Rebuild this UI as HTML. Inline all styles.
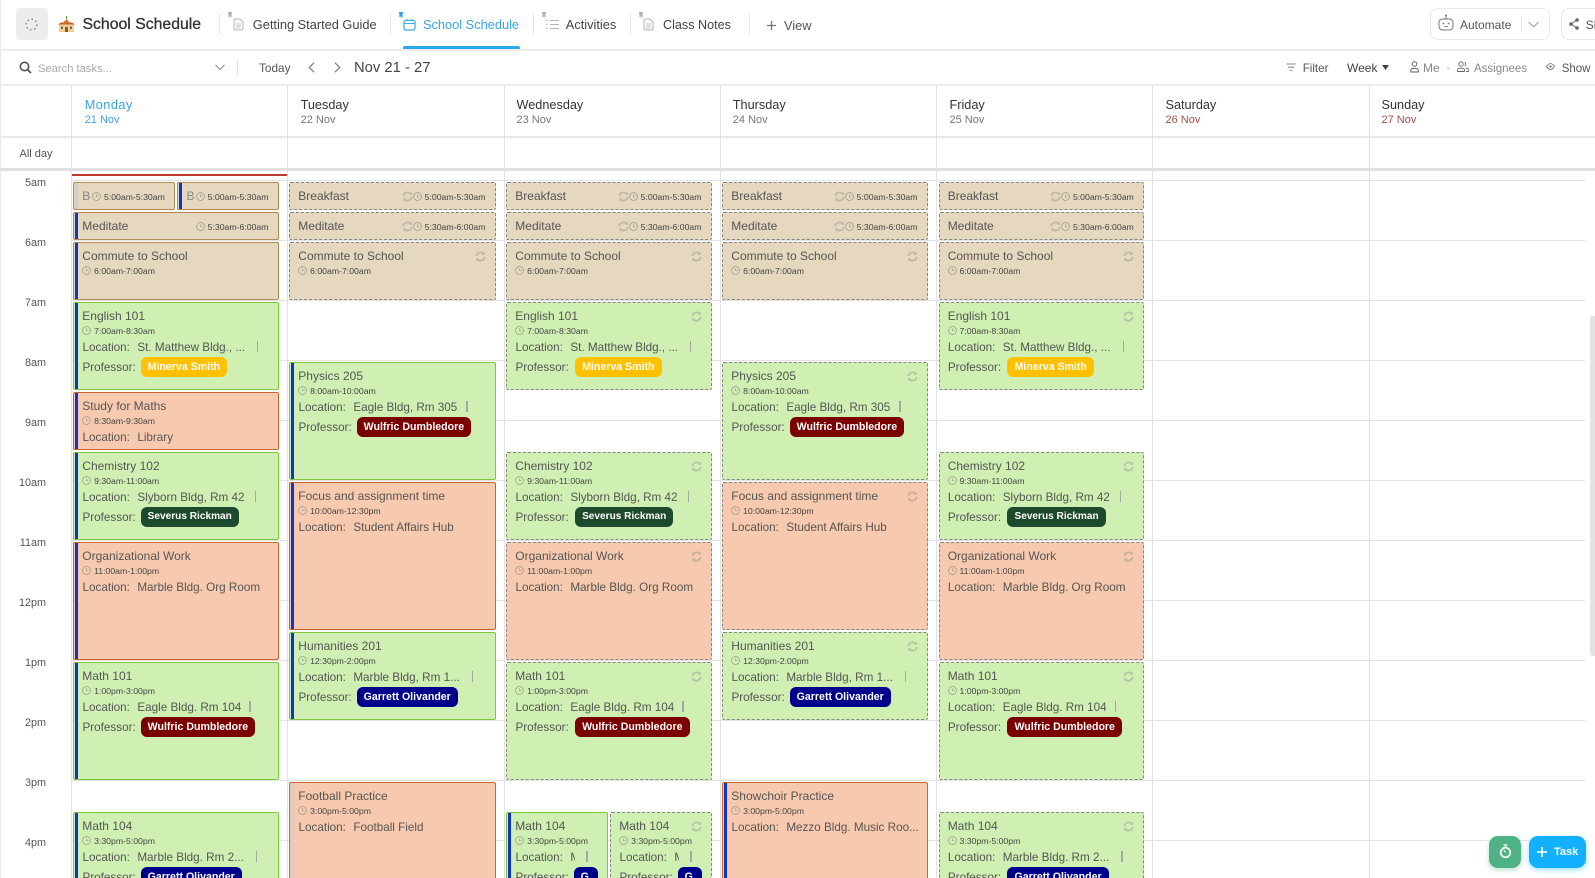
<!DOCTYPE html>
<html lang="en"><head><meta charset="utf-8"><title>School Schedule</title>
<style>
html,body{margin:0;padding:0;background:#fff}
#w{position:relative;width:1595px;height:878px;overflow:hidden;background:#fff;font-family:"Liberation Sans",sans-serif;color:#444}
.a{position:absolute;white-space:nowrap}
.hl{position:absolute;background:#e3e3e3;height:1px}
.vl{position:absolute;background:#e2e2e2;width:1px}
.td{position:absolute;width:1px;background:#e6e6e6;top:14px;height:20px}
.tab{position:absolute;top:17px;line-height:16px;font-size:12.8px;color:#444;white-space:nowrap}
.tb{position:absolute;top:60px;line-height:16px;font-size:12px;color:#555;white-space:nowrap}
.dn{position:absolute;top:96.5px;line-height:16px;font-size:12.7px;color:#333}
.dd{position:absolute;top:113px;line-height:14px;font-size:11px;color:#777}
.hr{position:absolute;left:10px;width:36px;text-align:right;font-size:10.8px;line-height:14px;color:#555}
.col{position:absolute;top:0;height:878px}
.e{position:absolute;left:0;right:0;box-sizing:border-box;border:1px solid;border-radius:2px;overflow:hidden;color:#555;font-size:11.7px}
.tan{background:#e5d8bf;border-color:#b08a52}
.g{background:#d0f0b3;border-color:#7cc63c}
.s{background:#f7c9ae;border-color:#c9642f}
.d{border:1px dashed #868686}
.b{position:absolute;left:.7px;top:-1px;bottom:-1px;width:3.3px;background:#1235c4}
.b.x{background:#cfcfcf}
.t{position:absolute;left:8px;top:3.7px;line-height:18px;font-size:12px;white-space:nowrap}
.m{position:absolute;left:8.2px;top:21.7px;line-height:12px;font-size:8.7px;color:#444;white-space:nowrap;display:flex;align-items:center}
.m svg{width:9px;height:9px;margin-right:2.6px}
.l{position:absolute;left:8.2px;top:36.6px;line-height:16px;white-space:nowrap}
.l span{margin-left:7.4px}
.l i{display:inline-block;width:1.3px;height:11px;background:#a6a6a6;margin-left:12px;vertical-align:-1px}
.l i.n8{margin-left:8px}.l i.n9{margin-left:9px}.l i.n10{margin-left:10px}
.p{position:absolute;left:8.2px;top:54.5px;line-height:20px;white-space:nowrap}
.tag{position:absolute;left:58.2px;top:-.8px;height:20px;line-height:20px;border-radius:6px;padding:0 7px;color:#fff;font-weight:bold;font-size:10.6px}
.k .tag{left:59.6px}
.mi{background:#ffc000}.wu{background:#7b0000}.se{background:#1d4a2c;font-size:10.1px}.ga{background:#00008b}
.rf{position:absolute;right:8.5px;top:7.5px;width:11px;height:11px}
.r{position:absolute;right:9.2px;top:7.7px;line-height:12px;font-size:8.7px;color:#444;display:flex;align-items:center;white-space:nowrap}
.r svg{width:9px;height:9px;margin-right:2.6px}
.r svg.q{margin-right:0;width:11px;height:11px}
</style></head><body><div id="w">
<svg width="0" height="0" style="position:absolute"><defs>
<symbol id="c" viewBox="0 0 10 10"><circle cx="5" cy="5" r="4.4" fill="none" stroke="#9a9a8c" stroke-width=".8"/><path d="M5 2.4V5.2H7.4" fill="none" stroke="#9a9a8c" stroke-width=".7"/></symbol>
<symbol id="f" viewBox="0 0 10 10"><g opacity=".45"><path d="M1.2 4.6A3.9 3.9 0 0 1 8 2.6M8.8 5.4A3.9 3.9 0 0 1 2 7.4" fill="none" stroke="#8f8f8f" stroke-width="1.6"/><path d="M8.9 .6V3.4H6.2ZM1.1 9.4V6.600H3.8Z" fill="#8f8f8f"/></g></symbol>
<symbol id="pin" viewBox="0 0 6 7"><path d="M1 0H5V1L4.4 3.4 5.6 4.6H3.4L3 7 2.6 4.6H.4L1.6 3.4 1 1Z" fill="currentColor"/></symbol>
</defs></svg>

<!-- top bar -->
<div class="a" style="left:0;top:0;width:1px;height:878px;background:#e8e8e8"></div>
<div class="a" style="left:16px;top:8px;width:32px;height:32px;border-radius:5px;background:#ececec"></div>
<svg class="a" style="left:25px;top:18px" width="13" height="13" viewBox="0 0 13 13"><circle cx="6.5" cy="6.5" r="5.4" fill="none" stroke="#777" stroke-width="1.2" stroke-dasharray="1.6 2.6"/></svg>
<svg class="a" style="left:58px;top:16px" width="17" height="17" viewBox="0 0 17 17"><path d="M8.5 0V3" stroke="#5a9a3a" stroke-width="1"/><path d="M8.5 3 13 8H4Z" fill="#d9792c"/><rect x="1" y="8" width="15" height="8" fill="#f0cf96"/><path d="M0 8.5 3 6.5H14L17 8.5Z" fill="#c8642a"/><rect x="7" y="11" width="3" height="5" fill="#8a5a2a"/><rect x="3" y="10.5" width="2" height="2.5" fill="#7a6a55"/><rect x="12" y="10.5" width="2" height="2.5" fill="#7a6a55"/></svg>
<div class="a" style="left:82.5px;top:15px;line-height:20px;font-size:15.8px;color:#333;-webkit-text-stroke:.3px #333">School Schedule</div>

<div class="td" style="left:219px"></div>
<svg class="a" style="left:227px;top:12px;color:#b4b4b4" width="6" height="7"><use href="#pin"/></svg>
<svg class="a" style="left:233px;top:18px" width="11" height="13" viewBox="0 0 11 13"><path d="M1 2.5A1.5 1.5 0 0 1 2.5 1H7L10 4V10.5A1.5 1.5 0 0 1 8.5 12H2.5A1.5 1.5 0 0 1 1 10.5Z" fill="#fafafa" stroke="#b5b5b5"/><path d="M3 6H8M3 8H8M3 10H7" stroke="#b5b5b5" stroke-width=".8"/></svg>
<div class="tab" style="left:252.8px">Getting Started Guide</div>
<div class="td" style="left:390px"></div>
<svg class="a" style="left:398px;top:12px;color:#2aa6e6" width="6" height="7"><use href="#pin"/></svg>
<svg class="a" style="left:403px;top:18px" width="13" height="13" viewBox="0 0 13 13"><rect x="1" y="2.5" width="11" height="9.5" rx="2" fill="none" stroke="#3aa9e4" stroke-width="1.2"/><path d="M1 5.5H12M4 1V3M9 1V3" stroke="#3aa9e4" stroke-width="1.1"/></svg>
<div class="tab" style="left:423px;color:#35a5e2">School Schedule</div>
<div class="a" style="left:403px;top:46px;width:117px;height:3px;background:#2aaae8;border-radius:2px 2px 0 0"></div>
<div class="td" style="left:533px"></div>
<svg class="a" style="left:541px;top:12px;color:#b4b4b4" width="6" height="7"><use href="#pin"/></svg>
<svg class="a" style="left:546px;top:18px" width="13" height="13" viewBox="0 0 13 13"><path d="M4 2.5H13M4 6.5H13M4 10.5H13" stroke="#b5b5b5" stroke-width="1"/><path d="M0 2.5H2M0 6.5H2M0 10.5H2" stroke="#b5b5b5" stroke-width="1.3" stroke-dasharray="1 .5"/></svg>
<div class="tab" style="left:565.8px">Activities</div>
<div class="td" style="left:630px"></div>
<svg class="a" style="left:638px;top:12px;color:#b4b4b4" width="6" height="7"><use href="#pin"/></svg>
<svg class="a" style="left:643px;top:18px" width="11" height="13" viewBox="0 0 11 13"><path d="M1 2.5A1.5 1.5 0 0 1 2.5 1H7L10 4V10.5A1.5 1.5 0 0 1 8.5 12H2.5A1.5 1.5 0 0 1 1 10.5Z" fill="#fafafa" stroke="#b5b5b5"/><path d="M3 6H8M3 8H8M3 10H7" stroke="#b5b5b5" stroke-width=".8"/></svg>
<div class="tab" style="left:663px;font-size:12.6px">Class Notes</div>
<div class="td" style="left:749px"></div>
<svg class="a" style="left:766px;top:20px" width="11" height="11" viewBox="0 0 11 11"><path d="M5.5 1V10M1 5.5H10" stroke="#777" stroke-width="1.3"/></svg>
<div class="tab" style="left:784px;top:18px;color:#555">View</div>

<div class="a" style="left:1429.5px;top:8px;width:120px;height:32px;box-sizing:border-box;border:1px solid #e8e8e8;border-radius:8px"></div>
<svg class="a" style="left:1438px;top:14px" width="16" height="17" viewBox="0 0 16 17"><rect x="1" y="5" width="14" height="11" rx="3.5" fill="none" stroke="#777" stroke-width="1"/><path d="M8 1.5V5" stroke="#777"/><circle cx="8" cy="1.5" r="1" fill="#777"/><circle cx="5.5" cy="9.5" r=".9" fill="#777"/><circle cx="10.5" cy="9.5" r=".9" fill="#777"/><path d="M6 12.5H10" stroke="#777" stroke-width=".8"/></svg>
<div class="tab" style="left:1460px;font-size:12px;color:#555">Automate</div>
<div class="a" style="left:1520.5px;top:16px;width:1px;height:16px;background:#e6e6e6"></div>
<svg class="a" style="left:1527.5px;top:21px" width="11" height="7" viewBox="0 0 11 7"><path d="M.5 1 5.5 6 10.5 1" fill="none" stroke="#999" stroke-width="1"/></svg>
<div class="a" style="left:1560.5px;top:8px;width:60px;height:32px;box-sizing:border-box;border:1px solid #e8e8e8;border-radius:8px"></div>
<svg class="a" style="left:1569px;top:18px" width="10" height="12" viewBox="0 0 10 12"><circle cx="8" cy="2" r="1.8" fill="#666"/><circle cx="2" cy="6" r="1.8" fill="#666"/><circle cx="8" cy="10" r="1.8" fill="#666"/><path d="M8 2 2 6 8 10" fill="none" stroke="#666"/></svg>
<div class="tab" style="left:1585.7px;font-size:12px;color:#555">Share</div>
<div class="hl" style="left:0;right:0;top:49px;height:1.5px;background:#ececec"></div>

<!-- toolbar -->
<svg class="a" style="left:19px;top:61px" width="13" height="13" viewBox="0 0 13 13"><circle cx="5.5" cy="5.5" r="4.2" fill="none" stroke="#555" stroke-width="1.6"/><path d="M8.6 8.6 12 12" stroke="#555" stroke-width="1.8"/></svg>
<div class="tb" style="left:38px;top:60.5px;font-size:11.2px;color:#aaa">Search tasks...</div>
<svg class="a" style="left:215px;top:64px" width="10" height="7" viewBox="0 0 10 7"><path d="M.5 1 5 5.5 9.5 1" fill="none" stroke="#888" stroke-width="1"/></svg>
<div class="a" style="left:237px;top:59px;width:1px;height:16px;background:#e2e2e2"></div>
<div class="tb" style="left:259px;font-size:11.8px">Today</div>
<svg class="a" style="left:308px;top:62px" width="7" height="11" viewBox="0 0 7 11"><path d="M6 .8 1.2 5.5 6 10.2" fill="none" stroke="#777" stroke-width="1.1"/></svg>
<svg class="a" style="left:334px;top:62px" width="7" height="11" viewBox="0 0 7 11"><path d="M1 .8 5.8 5.5 1 10.2" fill="none" stroke="#777" stroke-width="1.1"/></svg>
<div class="tb" style="left:354px;font-size:14.8px;color:#444">Nov 21 - 27</div>
<svg class="a" style="left:1286px;top:63px" width="10" height="9" viewBox="0 0 10 9"><path d="M.5 1H9.5M2 4.2H8M3.8 7.5H6.2" stroke="#888" stroke-width="1.1"/></svg>
<div class="tb" style="left:1302.7px;top:60.6px;font-size:11.6px">Filter</div>
<div class="tb" style="left:1347px;color:#444">Week</div>
<svg class="a" style="left:1381.5px;top:65px" width="7" height="5" viewBox="0 0 7 5"><path d="M0 0H7L3.5 5Z" fill="#444"/></svg>
<svg class="a" style="left:1409.5px;top:61px" width="9" height="12" viewBox="0 0 9 12"><circle cx="4.5" cy="3" r="2.3" fill="none" stroke="#666"/><path d="M.7 11V9.5A2 2 0 0 1 2.7 7.5H6.3A2 2 0 0 1 8.3 9.5V11H.7Z" fill="none" stroke="#666"/></svg>
<div class="tb" style="left:1423px;color:#888">Me</div>
<div class="a" style="left:1447px;top:66.5px;width:3px;height:3px;border-radius:50%;background:#ddd"></div>
<svg class="a" style="left:1457px;top:61px" width="12" height="12" viewBox="0 0 12 12"><circle cx="4" cy="3" r="2.2" fill="none" stroke="#666" stroke-width=".9"/><path d="M.6 10.5V9A2 2 0 0 1 2.6 7.2H5.4A2 2 0 0 1 7.4 9V10.5ZM7.6 1.2A2 2 0 0 1 7.6 4.8M8.6 7.2H9.4A2 2 0 0 1 11.4 9V10.5H9.2" fill="none" stroke="#666" stroke-width=".9"/></svg>
<div class="tb" style="left:1474px;top:60.6px;font-size:11.5px;color:#888">Assignees</div>
<svg class="a" style="left:1546px;top:62px" width="9" height="9" viewBox="0 0 9 9"><path d="M.5 4.5C2 2 3.2 1.6 4.5 1.6S7 2 8.500 4.5C7 7 5.800 7.400 4.500 7.400S2 7 .5 4.500Z" fill="none" stroke="#666" stroke-width=".8"/><circle cx="4.500" cy="4.500" r="1.100" fill="#666"/></svg>
<div class="tb" style="left:1561.7px;top:60.6px;font-size:11.5px">Show</div>
<div class="hl" style="left:0;right:0;top:84px;height:1.5px;background:#ececec"></div>

<!-- day headers -->
<div class="dn" style="left:84.700px;color:#3aa3e0;letter-spacing:.5px">Monday</div><div class="dd" style="left:84.700px;color:#3aa3e0">21 Nov</div>
<div class="dn" style="left:300.600px">Tuesday</div><div class="dd" style="left:300.600px">22 Nov</div>
<div class="dn" style="left:516.500px">Wednesday</div><div class="dd" style="left:516.500px">23 Nov</div>
<div class="dn" style="left:732.800px">Thursday</div><div class="dd" style="left:732.800px">24 Nov</div>
<div class="dn" style="left:949.500px">Friday</div><div class="dd" style="left:949.500px">25 Nov</div>
<div class="dn" style="left:1165.500px">Saturday</div><div class="dd" style="left:1165.500px;color:#a5524a">26 Nov</div>
<div class="dn" style="left:1381.500px">Sunday</div><div class="dd" style="left:1381.500px;color:#a5524a">27 Nov</div>
<div class="hl" style="left:0;right:0;top:136px;height:1.5px;background:#e8e8e8"></div>
<div class="a" style="left:19.500px;top:147px;line-height:14px;font-size:11px;color:#555">All day</div>
<div class="hl" style="left:0;right:0;top:168px;height:3px;background:#e0e0e0"></div>

<!-- grid -->
<div class="vl" style="left:71px;top:85px;height:793px"></div>
<div class="vl" style="left:287px;top:85px;height:793px"></div>
<div class="vl" style="left:504px;top:85px;height:793px"></div>
<div class="vl" style="left:720px;top:85px;height:793px"></div>
<div class="vl" style="left:936px;top:85px;height:793px"></div>
<div class="vl" style="left:1152px;top:85px;height:793px"></div>
<div class="vl" style="left:1369px;top:85px;height:793px"></div>
<div class="hl" style="left:72px;width:1513px;top:180px"></div>
<div class="hl" style="left:72px;width:1513px;top:240px"></div>
<div class="hl" style="left:72px;width:1513px;top:300px"></div>
<div class="hl" style="left:72px;width:1513px;top:360px"></div>
<div class="hl" style="left:72px;width:1513px;top:420px"></div>
<div class="hl" style="left:72px;width:1513px;top:480px"></div>
<div class="hl" style="left:72px;width:1513px;top:540px"></div>
<div class="hl" style="left:72px;width:1513px;top:600px"></div>
<div class="hl" style="left:72px;width:1513px;top:660px"></div>
<div class="hl" style="left:72px;width:1513px;top:720px"></div>
<div class="hl" style="left:72px;width:1513px;top:780px"></div>
<div class="hl" style="left:72px;width:1513px;top:840px"></div>
<div class="a" style="left:72px;top:174px;width:215px;height:2px;background:#c0392f"></div>
<div class="hr" style="top:176px">5am</div>
<div class="hr" style="top:236px">6am</div>
<div class="hr" style="top:296px">7am</div>
<div class="hr" style="top:356px">8am</div>
<div class="hr" style="top:416px">9am</div>
<div class="hr" style="top:476px">10am</div>
<div class="hr" style="top:536px">11am</div>
<div class="hr" style="top:596px">12pm</div>
<div class="hr" style="top:656px">1pm</div>
<div class="hr" style="top:716px">2pm</div>
<div class="hr" style="top:776px">3pm</div>
<div class="hr" style="top:836px">4pm</div>

<!-- Monday -->
<div class="col" style="left:73.300px;width:205.400px">
<div class="e tan" style="top:182px;height:27.700px;right:103.700px"><b class="b x"></b><span class="t" style="color:#888">B</span><span class="r"><svg><use href="#c"/></svg>5:00am-5:30am</span></div>
<div class="e tan" style="top:182px;height:27.700px;left:104.200px"><b class="b"></b><span class="t" style="color:#888">B</span><span class="r"><svg><use href="#c"/></svg>5:00am-5:30am</span></div>
<div class="e tan" style="top:212px;height:27.700px"><b class="b"></b><span class="t">Meditate</span><span class="r"><svg><use href="#c"/></svg>5:30am-6:00am</span></div>
<div class="e tan" style="top:242px;height:57.700px"><b class="b"></b><div class="t">Commute to School</div><div class="m"><svg><use href="#c"/></svg>6:00am-7:00am</div></div>
<div class="e g" style="top:302px;height:87.700px"><b class="b"></b><div class="t">English 101</div><div class="m"><svg><use href="#c"/></svg>7:00am-8:30am</div><div class="l">Location:<span>St. Matthew Bldg., ...</span><i></i></div><div class="p">Professor:<span class="tag mi">Minerva Smith</span></div></div>
<div class="e s" style="top:392px;height:57.700px"><b class="b"></b><div class="t">Study for Maths</div><div class="m"><svg><use href="#c"/></svg>8:30am-9:30am</div><div class="l">Location:<span>Library</span></div></div>
<div class="e g" style="top:452px;height:87.700px"><b class="b"></b><div class="t">Chemistry 102</div><div class="m"><svg><use href="#c"/></svg>9:30am-11:00am</div><div class="l">Location:<span>Slyborn Bldg, Rm 42</span><i class="n10"></i></div><div class="p">Professor:<span class="tag se">Severus Rickman</span></div></div>
<div class="e s" style="top:542px;height:117.700px"><b class="b"></b><div class="t">Organizational Work</div><div class="m"><svg><use href="#c"/></svg>11:00am-1:00pm</div><div class="l">Location:<span>Marble Bldg. Org Room</span></div></div>
<div class="e g" style="top:662px;height:117.700px"><b class="b"></b><div class="t">Math 101</div><div class="m"><svg><use href="#c"/></svg>1:00pm-3:00pm</div><div class="l">Location:<span>Eagle Bldg. Rm 104</span><i class="n8"></i></div><div class="p">Professor:<span class="tag wu">Wulfric Dumbledore</span></div></div>
<div class="e g" style="top:812px;height:87.700px"><b class="b"></b><div class="t">Math 104</div><div class="m"><svg><use href="#c"/></svg>3:30pm-5:00pm</div><div class="l">Location:<span>Marble Bldg. Rm 2...</span><i></i></div><div class="p">Professor:<span class="tag ga">Garrett Olivander</span></div></div>
</div>

<!-- Tuesday -->
<div class="col" style="left:289.300px;width:206.400px">
<div class="e tan d" style="top:182px;height:27.700px"><span class="t">Breakfast</span><span class="r"><svg class="q"><use href="#f"/></svg><svg><use href="#c"/></svg>5:00am-5:30am</span></div>
<div class="e tan d" style="top:212px;height:27.700px"><span class="t">Meditate</span><span class="r"><svg class="q"><use href="#f"/></svg><svg><use href="#c"/></svg>5:30am-6:00am</span></div>
<div class="e tan d" style="top:242px;height:57.700px"><div class="t">Commute to School</div><svg class="rf"><use href="#f"/></svg><div class="m"><svg><use href="#c"/></svg>6:00am-7:00am</div></div>
<div class="e g" style="top:362px;height:117.700px"><b class="b"></b><div class="t">Physics 205</div><div class="m"><svg><use href="#c"/></svg>8:00am-10:00am</div><div class="l">Location:<span>Eagle Bldg, Rm 305</span><i class="n9"></i></div><div class="p">Professor:<span class="tag wu">Wulfric Dumbledore</span></div></div>
<div class="e s" style="top:482px;height:147.700px"><b class="b"></b><div class="t">Focus and assignment time</div><div class="m"><svg><use href="#c"/></svg>10:00am-12:30pm</div><div class="l">Location:<span>Student Affairs Hub</span></div></div>
<div class="e g" style="top:632px;height:87.700px"><b class="b"></b><div class="t">Humanities 201</div><div class="m"><svg><use href="#c"/></svg>12:30pm-2:00pm</div><div class="l">Location:<span>Marble Bldg, Rm 1...</span><i></i></div><div class="p">Professor:<span class="tag ga">Garrett Olivander</span></div></div>
<div class="e s" style="top:782px;height:117.700px"><b class="b x"></b><div class="t">Football Practice</div><div class="m"><svg><use href="#c"/></svg>3:00pm-5:00pm</div><div class="l">Location:<span>Football Field</span></div></div>
</div>

<!-- Wednesday -->
<div class="col k" style="left:506.300px;width:205.400px">
<div class="e tan d" style="top:182px;height:27.700px"><span class="t">Breakfast</span><span class="r"><svg class="q"><use href="#f"/></svg><svg><use href="#c"/></svg>5:00am-5:30am</span></div>
<div class="e tan d" style="top:212px;height:27.700px"><span class="t">Meditate</span><span class="r"><svg class="q"><use href="#f"/></svg><svg><use href="#c"/></svg>5:30am-6:00am</span></div>
<div class="e tan d" style="top:242px;height:57.700px"><div class="t">Commute to School</div><svg class="rf"><use href="#f"/></svg><div class="m"><svg><use href="#c"/></svg>6:00am-7:00am</div></div>
<div class="e g d" style="top:302px;height:87.700px"><div class="t">English 101</div><svg class="rf"><use href="#f"/></svg><div class="m"><svg><use href="#c"/></svg>7:00am-8:30am</div><div class="l">Location:<span>St. Matthew Bldg., ...</span><i></i></div><div class="p">Professor:<span class="tag mi">Minerva Smith</span></div></div>
<div class="e g d" style="top:452px;height:87.700px"><div class="t">Chemistry 102</div><svg class="rf"><use href="#f"/></svg><div class="m"><svg><use href="#c"/></svg>9:30am-11:00am</div><div class="l">Location:<span>Slyborn Bldg, Rm 42</span><i class="n10"></i></div><div class="p">Professor:<span class="tag se">Severus Rickman</span></div></div>
<div class="e s d" style="top:542px;height:117.700px"><div class="t">Organizational Work</div><svg class="rf"><use href="#f"/></svg><div class="m"><svg><use href="#c"/></svg>11:00am-1:00pm</div><div class="l">Location:<span>Marble Bldg. Org Room</span></div></div>
<div class="e g d" style="top:662px;height:117.700px"><div class="t">Math 101</div><svg class="rf"><use href="#f"/></svg><div class="m"><svg><use href="#c"/></svg>1:00pm-3:00pm</div><div class="l">Location:<span>Eagle Bldg. Rm 104</span><i class="n8"></i></div><div class="p">Professor:<span class="tag wu">Wulfric Dumbledore</span></div></div>
<div class="e g" style="top:812px;height:87.700px;right:104px"><b class="b"></b><div class="t">Math 104</div><div class="m"><svg><use href="#c"/></svg>3:30pm-5:00pm</div><div class="l">Location:<span style="display:inline-block;width:5px;overflow:hidden;vertical-align:bottom">M</span><i style="margin-left:11px"></i></div><div class="p">Professor:<span class="tag ga" style="left:58.200px;width:10px;overflow:hidden">G</span></div></div>
<div class="e g d" style="top:812px;height:87.700px;left:104px"><div class="t">Math 104</div><svg class="rf"><use href="#f"/></svg><div class="m"><svg><use href="#c"/></svg>3:30pm-5:00pm</div><div class="l">Location:<span style="display:inline-block;width:5px;overflow:hidden;vertical-align:bottom">M</span><i style="margin-left:11px"></i></div><div class="p">Professor:<span class="tag ga" style="left:58.200px;width:10px;overflow:hidden">G</span></div></div>
</div>

<!-- Thursday -->
<div class="col" style="left:722.300px;width:205.400px">
<div class="e tan d" style="top:182px;height:27.700px"><span class="t">Breakfast</span><span class="r"><svg class="q"><use href="#f"/></svg><svg><use href="#c"/></svg>5:00am-5:30am</span></div>
<div class="e tan d" style="top:212px;height:27.700px"><span class="t">Meditate</span><span class="r"><svg class="q"><use href="#f"/></svg><svg><use href="#c"/></svg>5:30am-6:00am</span></div>
<div class="e tan d" style="top:242px;height:57.700px"><div class="t">Commute to School</div><svg class="rf"><use href="#f"/></svg><div class="m"><svg><use href="#c"/></svg>6:00am-7:00am</div></div>
<div class="e g d" style="top:362px;height:117.700px"><div class="t">Physics 205</div><svg class="rf"><use href="#f"/></svg><div class="m"><svg><use href="#c"/></svg>8:00am-10:00am</div><div class="l">Location:<span>Eagle Bldg, Rm 305</span><i class="n9"></i></div><div class="p">Professor:<span class="tag wu">Wulfric Dumbledore</span></div></div>
<div class="e s d" style="top:482px;height:147.700px"><div class="t">Focus and assignment time</div><svg class="rf"><use href="#f"/></svg><div class="m"><svg><use href="#c"/></svg>10:00am-12:30pm</div><div class="l">Location:<span>Student Affairs Hub</span></div></div>
<div class="e g d" style="top:632px;height:87.700px"><div class="t">Humanities 201</div><svg class="rf"><use href="#f"/></svg><div class="m"><svg><use href="#c"/></svg>12:30pm-2:00pm</div><div class="l">Location:<span>Marble Bldg, Rm 1...</span><i></i></div><div class="p">Professor:<span class="tag ga">Garrett Olivander</span></div></div>
<div class="e s" style="top:782px;height:117.700px"><b class="b"></b><div class="t">Showchoir Practice</div><div class="m"><svg><use href="#c"/></svg>3:00pm-5:00pm</div><div class="l">Location:<span>Mezzo Bldg. Music Roo...</span></div></div>
</div>

<!-- Friday -->
<div class="col k" style="left:938.700px;width:205.300px">
<div class="e tan d" style="top:182px;height:27.700px"><span class="t">Breakfast</span><span class="r"><svg class="q"><use href="#f"/></svg><svg><use href="#c"/></svg>5:00am-5:30am</span></div>
<div class="e tan d" style="top:212px;height:27.700px"><span class="t">Meditate</span><span class="r"><svg class="q"><use href="#f"/></svg><svg><use href="#c"/></svg>5:30am-6:00am</span></div>
<div class="e tan d" style="top:242px;height:57.700px"><div class="t">Commute to School</div><svg class="rf"><use href="#f"/></svg><div class="m"><svg><use href="#c"/></svg>6:00am-7:00am</div></div>
<div class="e g d" style="top:302px;height:87.700px"><div class="t">English 101</div><svg class="rf"><use href="#f"/></svg><div class="m"><svg><use href="#c"/></svg>7:00am-8:30am</div><div class="l">Location:<span>St. Matthew Bldg., ...</span><i></i></div><div class="p">Professor:<span class="tag mi">Minerva Smith</span></div></div>
<div class="e g d" style="top:452px;height:87.700px"><div class="t">Chemistry 102</div><svg class="rf"><use href="#f"/></svg><div class="m"><svg><use href="#c"/></svg>9:30am-11:00am</div><div class="l">Location:<span>Slyborn Bldg, Rm 42</span><i class="n10"></i></div><div class="p">Professor:<span class="tag se">Severus Rickman</span></div></div>
<div class="e s d" style="top:542px;height:117.700px"><div class="t">Organizational Work</div><svg class="rf"><use href="#f"/></svg><div class="m"><svg><use href="#c"/></svg>11:00am-1:00pm</div><div class="l">Location:<span>Marble Bldg. Org Room</span></div></div>
<div class="e g d" style="top:662px;height:117.700px"><div class="t">Math 101</div><svg class="rf"><use href="#f"/></svg><div class="m"><svg><use href="#c"/></svg>1:00pm-3:00pm</div><div class="l">Location:<span>Eagle Bldg. Rm 104</span><i class="n8"></i></div><div class="p">Professor:<span class="tag wu">Wulfric Dumbledore</span></div></div>
<div class="e g d" style="top:812px;height:87.700px"><div class="t">Math 104</div><svg class="rf"><use href="#f"/></svg><div class="m"><svg><use href="#c"/></svg>3:30pm-5:00pm</div><div class="l">Location:<span>Marble Bldg. Rm 2...</span><i></i></div><div class="p">Professor:<span class="tag ga">Garrett Olivander</span></div></div>
</div>

<!-- scrollbar + floating buttons -->
<div class="a" style="left:1590px;top:316px;width:5px;height:340px;background:#e2e2e2;border-radius:3px 0 0 3px"></div>
<div class="a" style="left:1489px;top:836px;width:32px;height:32px;border-radius:9px;background:#4fb286;box-shadow:0 2px 6px rgba(79,178,134,.4)"></div>
<svg class="a" style="left:1498.500px;top:844px" width="13" height="15" viewBox="0 0 13 15"><path d="M4.500 1H8.500M6.500 1V3" stroke="#fff" stroke-width="1.300"/><circle cx="6.500" cy="8.500" r="4.800" fill="none" stroke="#fff" stroke-width="1.700"/><path d="M6.500 8.500 4.800 6" stroke="#fff" stroke-width="1.100"/></svg>
<div class="a" style="left:1529px;top:836px;width:57px;height:32px;border-radius:9px;background:#12b0ff;box-shadow:0 2px 6px rgba(18,176,255,.4)"></div>
<svg class="a" style="left:1537px;top:847px" width="10" height="10" viewBox="0 0 10 10"><path d="M5 0V10M0 5H10" stroke="#fff" stroke-width="1.600"/></svg>
<div class="a" style="left:1554px;top:844px;line-height:16px;font-size:11px;font-weight:bold;color:#fff">Task</div>
</div></body></html>
